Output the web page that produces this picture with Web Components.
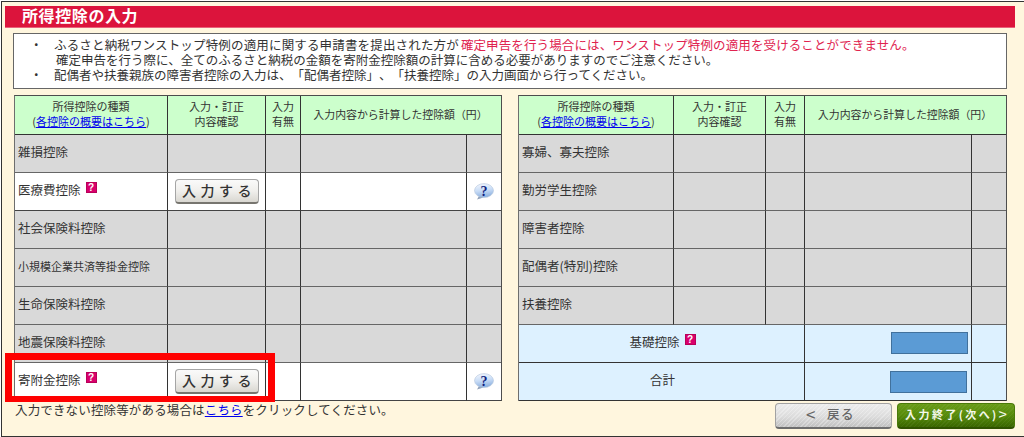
<!DOCTYPE html>
<html lang="ja">
<head>
<meta charset="utf-8">
<title>所得控除の入力</title>
<style>
  html, body { margin: 0; height: 437px; overflow: hidden; background: #fff; }
  body { font-family: "Noto Sans CJK JP", "Noto Sans", sans-serif; color: #2b2b2b; text-spacing-trim: space-all; }
</style>
</head>
<body>

<tax-page>
  <page-title>所得控除の入力</page-title>
  <notice-box>
    <notice-line bullet><span style="letter-spacing:0.16px;margin-right:2px">ふるさと納税ワンストップ特例の適用に関する申請書を提出された方が</span><em>確定申告を行う場合には、ワンストップ特例の適用を受けることができません。</em></notice-line>
    <notice-line indent>確定申告を行う際に、全てのふるさと納税の金額を寄附金控除額の計算に含める必要がありますのでご注意ください。</notice-line>
    <notice-line bullet>配偶者や扶養親族の障害者控除の入力は、「配偶者控除」、「扶養控除」の入力画面から行ってください。</notice-line>
  </notice-box>

  <table-pair>
    <deduction-table style="--cols: 153px 98px 35px 166px 34px">
      <deduction-head></deduction-head>
      <deduction-row label="雑損控除"></deduction-row>
      <deduction-row label="医療費控除" active></deduction-row>
      <deduction-row label="社会保険料控除"></deduction-row>
      <deduction-row label="小規模企業共済等掛金控除" small></deduction-row>
      <deduction-row label="生命保険料控除"></deduction-row>
      <deduction-row label="地震保険料控除"></deduction-row>
      <deduction-row label="寄附金控除" active></deduction-row>
    </deduction-table>
    <deduction-table style="--cols: 155px 92px 39px 167px 34px">
      <deduction-head></deduction-head>
      <deduction-row label="寡婦、寡夫控除"></deduction-row>
      <deduction-row label="勤労学生控除"></deduction-row>
      <deduction-row label="障害者控除"></deduction-row>
      <deduction-row label="配偶者(特別)控除"></deduction-row>
      <deduction-row label="扶養控除"></deduction-row>
      <deduction-total label="基礎控除" mark inset="3" drop="7"></deduction-total>
      <deduction-total label="合計" inset="4" drop="8"></deduction-total>
    </deduction-table>
  </table-pair>

  <page-footer>
    <span>入力できない控除等がある場合は<a href="#">こちら</a>をクリックしてください。</span>
    <nav-button slot="nav" kind="back"><b style="font-weight:400;font-size:17px;margin:0 10px 0 -6px">&lt;</b>戻る</nav-button>
    <nav-button slot="nav" kind="next">入力終了(次へ)<b style="font-weight:400;font-size:15px;letter-spacing:0">&gt;</b></nav-button>
  </page-footer>

  <red-mark></red-mark>
</tax-page>

<script>
// help icons used inside the table rows
class HelpMark extends HTMLElement {
  constructor() {
    super()
    this.attachShadow({ mode: 'open' })
    this.shadowRoot.innerHTML = `
    <style>
      :host {
        display: inline-flex;
        width: 11px;
        height: 11px;
        margin-left: 5px;
        background: #d9006c;
        border: 1px solid #b80058;
        box-sizing: border-box;
        align-items: center;
        justify-content: center;
        color: #fff;
        font: bold 10px/10px "Liberation Sans", sans-serif;
        position: relative;
        top: -2px;
      }
    </style>?`
  }
}

class HelpBubble extends HTMLElement {
  constructor() {
    super()
    this.attachShadow({ mode: 'open' })
    this.shadowRoot.innerHTML = `
    <style>
      :host { display: block; width: 20px; height: 17px; }
      svg { display: block; }
      text { font: bold 14px "Liberation Serif", serif; fill: #101f80; }
    </style>
    <svg width="20" height="17" viewBox="0 0 20 17">
      <defs>
        <linearGradient id="b" x1="0" y1="0" x2="0.2" y2="1">
          <stop offset="0" stop-color="#f6f9ff"/>
          <stop offset="0.55" stop-color="#c8dcf6"/>
          <stop offset="1" stop-color="#8fb2e0"/>
        </linearGradient>
      </defs>
      <path d="M5 13 L3 16.6 L9.5 14.5 Z" fill="#8e9fb8"/>
      <ellipse cx="10" cy="7.6" rx="9.5" ry="7" fill="url(#b)" stroke="#b4c4da" stroke-width="0.6"/>
      <text x="10" y="12.8" text-anchor="middle">?</text>
    </svg>`
  }
}

class EntryButton extends HTMLElement {
  constructor() {
    super()
    this.attachShadow({ mode: 'open' })
    this.shadowRoot.innerHTML = `
    <style>
      :host {
        display: flex;
        width: 84px;
        height: 25px;
        box-sizing: border-box;
        align-items: center;
        justify-content: center;
        border: 1px solid #a5a5a5;
        border-bottom: 2px solid #77756f;
        border-radius: 4px;
        background: linear-gradient(#fafafa, #f0efec 50%, #d9d7d1);
        color: #333;
        font-size: 14px;
        font-weight: 500;
        letter-spacing: 4.5px;
        white-space: nowrap;
        padding: 0 0 2px 4px;
        cursor: pointer;
      }
    </style>入力する`
  }
}

class TaxPage extends HTMLElement {
  constructor() {
    super()
    this.attachShadow({ mode: 'open' })
    this.shadowRoot.innerHTML = `
    <style>
      :host {
        display: flex;
        flex-direction: column;
        box-sizing: border-box;
        position: relative;
        margin: 1px 0 0 1px;
        height: 436px;
        padding: 4px 0 0 3px;
        background: #fff6de;
        border: 1px solid #333;
        border-right: 0;
      }
    </style>
    <slot></slot>`
  }
}

class PageTitle extends HTMLElement {
  constructor() {
    super()
    this.attachShadow({ mode: 'open' })
    this.shadowRoot.innerHTML = `
    <style>
      :host {
        display: block;
        width: 1010px;
        height: 22px;
        padding-left: 17px;
        box-sizing: border-box;
        background: #dc143c;
        border-bottom: 1px solid #e8627c;
        color: #fff;
        font-size: 16px;
        font-weight: 700;
        letter-spacing: 0.6px;
        line-height: 19px;
      }
    </style>
    <slot></slot>`
  }
}

class NoticeBox extends HTMLElement {
  constructor() {
    super()
    this.attachShadow({ mode: 'open' })
    this.shadowRoot.innerHTML = `
    <style>
      :host {
        display: block;
        box-sizing: border-box;
        width: 994px;
        height: 56px;
        margin: 5px 0 6px 8px;
        padding: 3px 0 0 16px;
        background: #fff;
        border: 1px solid #666;
        font-size: 12.5px;
        line-height: 15px;
        color: #333;
      }
    </style>
    <slot></slot>`
  }
}

class NoticeLine extends HTMLElement {
  constructor() {
    super()
    this.attachShadow({ mode: 'open' })
    const indent = this.hasAttribute('indent')
    this.shadowRoot.innerHTML = `
    <style>
      :host {
        display: flex;
        white-space: nowrap;
      }
      #dot { width: 24px; flex: none; }
      #tekst { padding-left: ${indent ? '2px' : '0'}; }
      ::slotted(em) { font-style: normal; color: #e0234f; letter-spacing: 0.12px; }
    </style>
    <span id="dot">${this.hasAttribute('bullet') ? '・' : ''}</span>
    <span id="tekst"><slot></slot></span>`
  }
}

class TablePair extends HTMLElement {
  constructor() {
    super()
    this.attachShadow({ mode: 'open' })
    this.shadowRoot.innerHTML = `
    <style>
      :host {
        display: flex;
        gap: 16px;
        margin-left: 9px;
      }
    </style>
    <slot></slot>`
  }
}

class DeductionTable extends HTMLElement {
  constructor() {
    super()
    this.attachShadow({ mode: 'open' })
    this.shadowRoot.innerHTML = `
    <style>
      :host {
        display: block;
        box-sizing: content-box;
        border: 1px solid #4d4d4d;
        border-left-color: #6e6e6e;
        border-bottom: 0;
      }
    </style>
    <slot></slot>`
  }
}

class DeductionHead extends HTMLElement {
  constructor() {
    super()
    this.attachShadow({ mode: 'open' })
    this.shadowRoot.innerHTML = `
    <style>
      :host {
        display: grid;
        grid-template-columns: var(--cols);
        height: 39px;
        background: #ccffcc;
        font-size: 11px;
        line-height: 15px;
        text-align: center;
        color: #333;
      }
      div {
        display: flex;
        align-items: center;
        justify-content: center;
        box-sizing: border-box;
        padding-bottom: 2px;
        border-right: 1px solid #333;
        border-bottom: 1px solid #333;
      }
      #sum { grid-column: span 2; border-right: 0; font-size: 10.9px; white-space: nowrap; padding-right: 1px; }
      a { color: #0000ee; }
    </style>
    <div><span>所得控除の種類<br>(<a href="#">各控除の概要はこちら</a>)</span></div>
    <div><span>入力・訂正<br>内容確認</span></div>
    <div><span>入力<br>有無</span></div>
    <div id="sum">入力内容から計算した控除額（円）</div>`
  }
}

class DeductionRow extends HTMLElement {
  constructor() {
    super()
    this.attachShadow({ mode: 'open' })
    const active = this.hasAttribute('active')
    const small = this.hasAttribute('small')
    this.shadowRoot.innerHTML = `
    <style>
      :host {
        display: grid;
        grid-template-columns: var(--cols);
        height: 38px;
        background: ${active ? '#fff' : '#d9d9d9'};
        color: #333;
      }
      div {
        display: flex;
        align-items: center;
        box-sizing: border-box;
        border-right: 1px solid #333;
        border-bottom: 1px solid ${active ? '#444' : '#666'};
      }
      #navn {
        padding: 0 0 4px 3px;
        font-size: ${small ? '11px' : '12.5px'};
        white-space: nowrap;
      }
      #knapp { justify-content: center; padding-left: 1px; }
      #hjelp { justify-content: center; border-right: 0; padding-right: 1px; }
    </style>
    <div id="navn">${this.getAttribute('label')}${active ? '<help-mark></help-mark>' : ''}</div>
    <div id="knapp">${active ? '<entry-button></entry-button>' : ''}</div>
    <div></div>
    <div></div>
    <div id="hjelp">${active ? '<help-bubble></help-bubble>' : ''}</div>`
  }
}

class DeductionTotal extends HTMLElement {
  constructor() {
    super()
    this.attachShadow({ mode: 'open' })
    const inset = this.getAttribute('inset')
    const drop = this.getAttribute('drop')
    this.shadowRoot.innerHTML = `
    <style>
      :host {
        display: grid;
        grid-template-columns: var(--cols);
        height: 38px;
        background: #ddf1ff;
        color: #333;
        font-size: 12.5px;
      }
      div {
        display: flex;
        align-items: center;
        box-sizing: border-box;
        border-right: 1px solid #333;
        border-bottom: 1px solid #333;
      }
      #navn { grid-column: span 3; justify-content: center; padding: 0 0 4px 2px; }
      #belop { justify-content: flex-end; align-items: flex-start; padding: ${drop}px ${inset}px 0 0; }
      #boks {
        width: 77px;
        height: 22px;
        box-sizing: border-box;
        border: 1px solid #41719c;
        background: #5b9bd5;
      }
      #tom { border-right: 0; }
    </style>
    <div id="navn">${this.getAttribute('label')}${this.hasAttribute('mark') ? '<help-mark></help-mark>' : ''}</div>
    <div id="belop"><span id="boks"></span></div>
    <div id="tom"></div>`
  }
}

class PageFooter extends HTMLElement {
  constructor() {
    super()
    this.attachShadow({ mode: 'open' })
    this.shadowRoot.innerHTML = `
    <style>
      :host {
        display: flex;
        justify-content: space-between;
        width: 1010px;
        font-size: 12.5px;
        color: #333;
      }
      #tekst { padding-left: 10px; line-height: 17px; letter-spacing: 0.15px; white-space: nowrap; }
      #nav { display: flex; gap: 5px; padding-top: 2px; }
    </style>
    <div id="tekst"><slot></slot></div>
    <div id="nav"><slot name="nav"></slot></div>`
  }
}

class NavButton extends HTMLElement {
  constructor() {
    super()
    this.attachShadow({ mode: 'open' })
    const next = this.getAttribute('kind') === 'next'
    this.shadowRoot.innerHTML = `
    <style>
      :host {
        display: flex;
        align-items: center;
        justify-content: center;
        box-sizing: border-box;
        height: 26px;
        white-space: nowrap;
        border-radius: 4px;
        cursor: pointer;
        line-height: 20px;
        padding-bottom: 3px;
        width: ${next ? '118px' : '117px'};
        font-size: ${next ? '11px' : '12.5px'};
        font-weight: ${next ? '700' : '500'};
        letter-spacing: ${next ? '2.4px' : '1.5px'};
        color: ${next ? '#f4f8ea' : '#666'};
        background:
          repeating-linear-gradient(135deg, rgba(255,255,255,${next ? '0.05' : '0.28'}) 0 1px, transparent 1px 3px),
          ${next ? 'linear-gradient(#6a9c18, #558a0a 50%, #3a6600)' : 'linear-gradient(#ececec, #dcdcdc 55%, #c0c0c0)'};
        border: 1px solid ${next ? '#4a7a08' : '#a2a2a2'};
        border-bottom: 2px solid ${next ? '#2f5200' : '#6d6d6d'};
      }
    </style>
    <slot></slot>`
  }
}

// the red frame drawn on top of the screenshot
class RedMark extends HTMLElement {
  constructor() {
    super()
    this.attachShadow({ mode: 'open' })
    this.shadowRoot.innerHTML = `
    <style>
      :host {
        display: block;
        position: absolute;
        left: 3px;
        top: 351px;
        width: 270px;
        height: 49px;
        box-sizing: border-box;
        border: 7px solid #ff0000;
        border-bottom-width: 6px;
      }
    </style>`
  }
}

customElements.define('help-mark', HelpMark)
customElements.define('help-bubble', HelpBubble)
customElements.define('entry-button', EntryButton)
customElements.define('tax-page', TaxPage)
customElements.define('page-title', PageTitle)
customElements.define('notice-box', NoticeBox)
customElements.define('notice-line', NoticeLine)
customElements.define('table-pair', TablePair)
customElements.define('deduction-table', DeductionTable)
customElements.define('deduction-head', DeductionHead)
customElements.define('deduction-row', DeductionRow)
customElements.define('deduction-total', DeductionTotal)
customElements.define('page-footer', PageFooter)
customElements.define('nav-button', NavButton)
customElements.define('red-mark', RedMark)
</script>
</body>
</html>
